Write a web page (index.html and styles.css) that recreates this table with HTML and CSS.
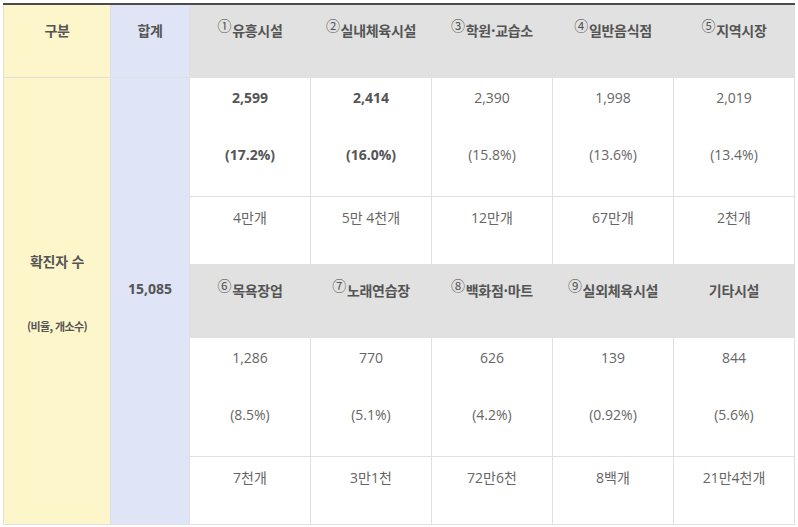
FILE: index.html
```html
<!DOCTYPE html>
<html lang="ko">
<head>
<meta charset="utf-8">
<title>시설별 확진자 수</title>
<link rel="stylesheet" href="styles.css">
</head>
<body>
<table class="stats">
  <colgroup>
    <col class="c-label"><col class="c-total">
    <col class="c-data"><col class="c-data"><col class="c-data"><col class="c-data"><col class="c-data">
  </colgroup>
  <tr class="r-head">
    <th class="label">구분</th>
    <th class="total">합계</th>
    <th><span class="circ">①</span>유흥시설</th>
    <th><span class="circ">②</span>실내체육시설</th>
    <th><span class="circ">③</span>학원·교습소</th>
    <th><span class="circ">④</span>일반음식점</th>
    <th><span class="circ">⑤</span>지역시장</th>
  </tr>
  <tr class="r-data">
    <td class="label side" rowspan="6">
      <div class="side-title">확진자 수</div>
      <div class="side-sub">(비율, 개소수)</div>
    </td>
    <td class="total sum" rowspan="6">15,085</td>
    <td class="strong"><div class="num">2,599</div><div class="pct">(17.2%)</div></td>
    <td class="strong"><div class="num">2,414</div><div class="pct">(16.0%)</div></td>
    <td><div class="num">2,390</div><div class="pct">(15.8%)</div></td>
    <td><div class="num">1,998</div><div class="pct">(13.6%)</div></td>
    <td><div class="num">2,019</div><div class="pct">(13.4%)</div></td>
  </tr>
  <tr class="r-sub">
    <td>4만개</td>
    <td>5만 4천개</td>
    <td>12만개</td>
    <td>67만개</td>
    <td>2천개</td>
  </tr>
  <tr class="r-head">
    <th><span class="circ">⑥</span>목욕장업</th>
    <th><span class="circ">⑦</span>노래연습장</th>
    <th><span class="circ">⑧</span>백화점·마트</th>
    <th><span class="circ">⑨</span>실외체육시설</th>
    <th>기타시설</th>
  </tr>
  <tr class="r-data">
    <td><div class="num">1,286</div><div class="pct">(8.5%)</div></td>
    <td><div class="num">770</div><div class="pct">(5.1%)</div></td>
    <td><div class="num">626</div><div class="pct">(4.2%)</div></td>
    <td><div class="num">139</div><div class="pct">(0.92%)</div></td>
    <td><div class="num">844</div><div class="pct">(5.6%)</div></td>
  </tr>
  <tr class="r-sub">
    <td>7천개</td>
    <td>3만1천</td>
    <td>72만6천</td>
    <td>8백개</td>
    <td>21만4천개</td>
  </tr>
</table>
</body>
</html>
```
FILE: styles.css
```css
html, body {
  margin: 0;
  padding: 0;
  background: #ffffff;
}

body {
  padding: 3px 0 0 3px;
  font-family: "Open Sans", "Noto Sans CJK KR", sans-serif;
  font-size: 14px;
  color: #666666;
}

.stats {
  border-collapse: collapse;
  table-layout: fixed;
  width: 792px;
  border-top: 2px solid #4b4b4b;
}

.c-label { width: 107px; }
.c-total { width: 79px; }
.c-data { width: 121px; }

.stats th,
.stats td {
  border: 1px solid #e0e0e0;
  text-align: center;
  vertical-align: top;
  padding: 0 2px;
  line-height: 20px;
}

.stats th {
  background: #e1e1e1;
  color: #555555;
  font-weight: 700;
  padding-top: 15px;
  font-family: "Noto Sans CJK KR", sans-serif;
  letter-spacing: -0.3px;
}

.r-head { height: 73px; }
.r-data { height: 119px; }
.r-sub { height: 68px; }

.r-data td { padding-top: 10px; }
.r-sub td { padding-top: 11px; }

.circ {
  position: relative;
  top: -5px;
  font-weight: 400;
  font-size: 14px;
  margin-right: 1px;
}

.pct { margin-top: 37px; }

.stats td.strong {
  font-weight: 700;
  color: #555555;
}

.stats .label {
  background: #fef6cb;
}

.stats .total {
  background: #dfe4f6;
}

.stats td.side,
.stats td.sum {
  vertical-align: middle;
  padding: 0 2px;
  font-weight: 700;
  color: #555555;
}

.stats td.sum { padding-bottom: 24px; }
.stats td.side { padding-bottom: 17px; }

.side-title {
  font-family: "Noto Sans CJK KR", sans-serif;
  letter-spacing: -0.3px;
}

.side-sub {
  margin-top: 48px;
  font-size: 11px;
  line-height: 14px;
  letter-spacing: -0.6px;
  font-family: "Noto Sans CJK KR", sans-serif;
}
```
